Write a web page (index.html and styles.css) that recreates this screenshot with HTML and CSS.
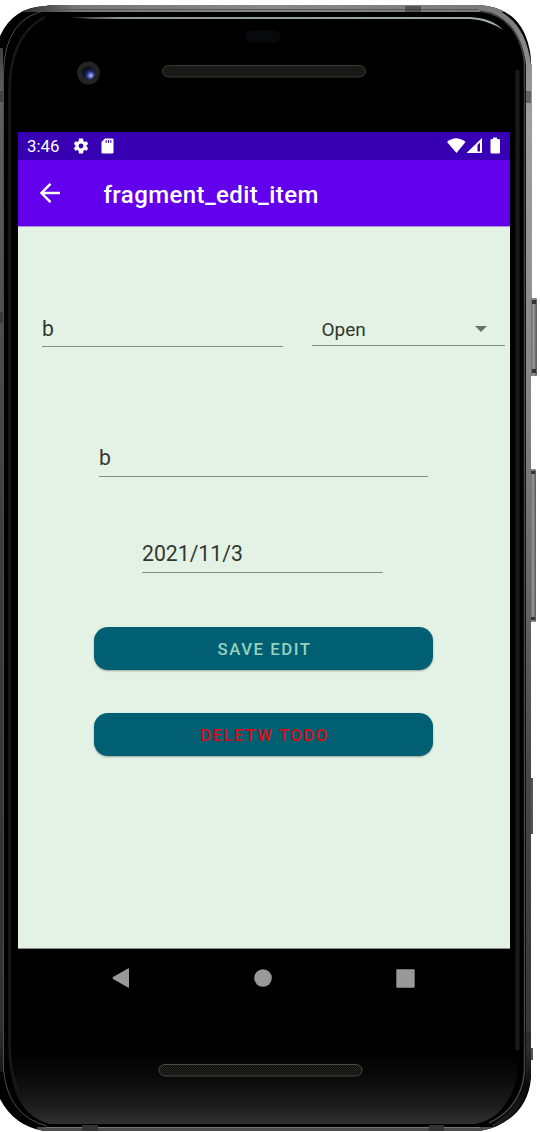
FILE: index.html
```html
<!DOCTYPE html>
<html lang="en">
<head>
<meta charset="utf-8">
<title>fragment_edit_item</title>
<link rel="stylesheet" href="styles.css">
</head>
<body>
<div class="device">
  <svg class="frame" width="540" height="1132" viewBox="0 0 540 1132" aria-hidden="true">
    <defs>
      <linearGradient id="rim" gradientUnits="userSpaceOnUse" x1="0" y1="0" x2="0" y2="1132"><stop offset="0" stop-color="#777"/><stop offset=".1" stop-color="#a0a0a0"/><stop offset=".35" stop-color="#858585"/><stop offset=".5" stop-color="#6b6b6b"/><stop offset=".68" stop-color="#474747"/><stop offset=".92" stop-color="#353535"/><stop offset=".96" stop-color="#0a0a0a"/><stop offset="1" stop-color="#222"/></linearGradient>
      <linearGradient id="leftRim" gradientUnits="userSpaceOnUse" x1="0" y1="30" x2="0" y2="1080"><stop offset="0" stop-color="#333"/><stop offset=".06" stop-color="#606060"/><stop offset=".5" stop-color="#3c3c3c"/><stop offset=".95" stop-color="#303030"/><stop offset="1" stop-color="#111"/></linearGradient>
      <linearGradient id="topRim" x1="0" y1="0" x2="1" y2="0"><stop offset="0" stop-color="#111"/><stop offset=".14" stop-color="#777"/><stop offset=".5" stop-color="#888"/><stop offset="1" stop-color="#777"/></linearGradient>
      <linearGradient id="chin" x1="0" y1="0" x2="0" y2="1"><stop offset="0" stop-color="#000"/><stop offset=".35" stop-color="#090909"/><stop offset=".75" stop-color="#1c1c1c"/><stop offset="1" stop-color="#303030"/></linearGradient>
      <linearGradient id="shine" x1="0" y1="0" x2="1" y2="0"><stop offset="0" stop-color="#222"/><stop offset=".12" stop-color="#8d9696"/><stop offset="1" stop-color="#a2abab"/></linearGradient>
      <linearGradient id="edge" x1="0" y1="0" x2="1" y2="0"><stop offset="0" stop-color="#000"/><stop offset=".5" stop-color="#1b1b1b"/><stop offset="1" stop-color="#000"/></linearGradient>
      <linearGradient id="keyMetal" x1="0" y1="0" x2="1" y2="0"><stop offset="0" stop-color="#555"/><stop offset=".5" stop-color="#999"/><stop offset="1" stop-color="#555"/></linearGradient>
      <radialGradient id="lens" cx=".68" cy=".7" r=".7"><stop offset="0" stop-color="#c2cdff"/><stop offset=".2" stop-color="#6878d0"/><stop offset=".5" stop-color="#1c2460"/><stop offset="1" stop-color="#090910"/></radialGradient>
      <pattern id="mesh" width="2" height="2" patternUnits="userSpaceOnUse"><rect width="2" height="2" fill="#10100e"/><rect width="1" height="1" fill="#292823"/><rect x="1" y="1" width="1" height="1" fill="#1e1d1a"/></pattern>
      <clipPath id="body"><path d="M0 36Q13 7 46 6L50 5H478Q520 7 529 47Q531 54 531 65V1078Q528 1112 497 1126Q485 1131 476 1131H44Q14 1126 0 1099Z"/></clipPath>
    </defs>
    <rect x="530" y="298" width="7" height="78" rx="1.500" fill="url(#keyMetal)"/>
    <path d="M532 300H536V304H532ZM532 369H536V373H532Z" fill="#333"/>
    <rect x="530" y="469" width="6" height="153" rx="1.500" fill="url(#keyMetal)"/>
    <path d="M531 471H535V474H531ZM531 617H535V620H531Z" fill="#333"/>
    <path d="M531 64h1V298H531Z" fill="#999"/>
    <path d="M531 778h2v56h-2ZM531 1048h2v12h-2Z" fill="#555"/>
    <g clip-path="url(#body)">
      <rect width="540" height="1132" fill="#000"/>
      <rect y="5" width="540" height="7" fill="url(#topRim)"/>
      <path d="M50 9.500H478" stroke="#555" fill="none"/>
      <path d="M2 85Q3 13 50 12H476Q519 16 525 66V110H2Z" fill="#000"/>
      <path d="M8 1050Q10 1114 50 1124H475Q517 1116 520 1050Z" fill="url(#chin)"/>
      <path d="M9.500 90Q10 35 45 17M9.500 90V1045Q10 1075 19 1092" fill="none" stroke="#181818" stroke-width="2.500"/>
      <path d="M517.500 70V1050" stroke="#191919" stroke-width="4"/>
      <path d="M1.500 48V1072" stroke="url(#leftRim)" stroke-width="3"/>
      <path d="M484 8Q523 17 528.500 65V1072Q526 1107 493 1127" fill="none" stroke="url(#rim)" stroke-width="5"/>
      <path d="M480 11Q518 16 524.500 62V1072Q521 1108 489 1123" fill="none" stroke="#444" stroke-width="1.500"/>
      <path d="M48 10Q5 17 3.500 72V1070Q8 1116 47 1126" fill="none" stroke="#4c4c4c" stroke-width="1"/>
      <rect x="37" y="1127" width="455" height="4" fill="#4f4d4f"/>
      <path d="M46 1127.500H480" stroke="#777577"/>
      <path d="M82 1125h16v6H82ZM429 1125h15v6h-15Z" fill="#343334"/>
      <path d="M405 6h16v6h-16ZM524 91h7v12h-7ZM0 91h3v11H0ZM0 312h3v11H0ZM524 1033h7v12h-7Z" fill="#222" fill-opacity=".45"/>
      <path d="M68 17H470Q492 18 503 30Q488 20 470 19H90Z" fill="url(#shine)"/>
    </g>
    <rect x="245.500" y="30.500" width="35" height="12" rx="6" fill="#08090d"/>
    <circle cx="88.500" cy="73" r="11.500" fill="#242222"/>
    <circle cx="88.500" cy="73" r="6.500" fill="url(#lens)"/>
    <rect x="162.500" y="65.500" width="203" height="11.500" rx="5.750" fill="url(#mesh)" stroke="#393734"/>
    <rect x="159" y="1064.500" width="203" height="11.500" rx="5.750" fill="url(#mesh)" stroke="#494b47"/>
  </svg>

  <main class="screen">
    <header class="status-bar">
      <span class="clock">3:46</span>
      <svg class="gear" width="18" height="18" viewBox="0 0 24 24"><path fill="#fff" fill-rule="evenodd" d="M19.400 13a7.500 7.500 0 0 0 0-2l2.200-1.700-2.100-3.600-2.600 1.100a7.500 7.500 0 0 0-1.700-1L14.800 2H9.200l-.4 3.800a7.500 7.500 0 0 0-1.700 1L4.500 5.700 2.400 9.300 4.600 11a7.500 7.500 0 0 0 0 2l-2.200 1.700 2.100 3.600 2.600-1.100a7.500 7.500 0 0 0 1.700 1l.4 3.800h5.600l.4-3.800a7.500 7.500 0 0 0 1.700-1l2.600 1.100 2.100-3.600ZM12 15.200a3.200 3.200 0 1 1 0-6.400 3.200 3.200 0 0 1 0 6.400Z"/></svg>
      <svg class="sd-card" width="13" height="16" viewBox="0 0 13 16"><path fill="#fff" d="M4 .5h7.500Q12.500.5 12.500 1.500v12.700q0 1.300-1.300 1.300H1.700Q.5 15.500.5 14.200V4Z"/><path d="M5.200 2v3M7.500 2v3M9.800 2v3" stroke="#3700b3"/></svg>
      <svg class="signals" width="54" height="18" viewBox="0 0 54 18"><path fill="#fff" d="M0 5Q9-2.500 18.500 5L9.500 16Z"/><path fill="#fff" fill-rule="evenodd" d="M19.500 16 35 1v15ZM30.500 8v6.500h2.500V5.500Z"/><path fill="#fff" d="M46 .5h4V2h2q1 0 1 1v12.500q0 1-1 1h-7.500q-1 0-1-1V3q0-1 1-1H46Z"/></svg>
    </header>
    <div class="app-bar">
      <svg class="back" width="20" height="20" viewBox="0 0 20 20"><path d="M20 10H2M10.500.8 1.500 10l9 9.200" fill="none" stroke="#fff" stroke-width="2.400"/></svg>
      <h1 class="title">fragment_edit_item</h1>
    </div>
    <section class="form">
      <div class="row">
        <div class="field name">b</div>
        <div class="field status"><span>Open</span><svg width="12" height="6" viewBox="0 0 12 6"><path d="M0 0h12L6 6Z" fill="#69706a"/></svg></div>
      </div>
      <div class="field description">b</div>
      <div class="field date">2021/11/3</div>
      <button class="button save">SAVE EDIT</button>
      <button class="button delete">DELETW TODO</button>
    </section>
    <nav class="nav-bar">
      <svg width="18" height="20" viewBox="0 0 18 20"><path d="M1 9 16 .5q1-.5 1 .5v18q0 1-1 .5L1 11q-1-1 0-2Z" fill="#999"/></svg>
      <svg width="18" height="18" viewBox="0 0 18 18"><circle cx="9" cy="9" r="8.800" fill="#999"/></svg>
      <svg width="19" height="19" viewBox="0 0 19 19"><rect x=".3" y=".3" width="18.400" height="18.400" rx="1" fill="#999"/></svg>
    </nav>
  </main>
</div>
</body>
</html>
```
FILE: styles.css
```css
* { box-sizing: border-box; }
body { margin: 0; background: #fff; font-family: Roboto, sans-serif; }
.device { position: relative; width: 540px; height: 1132px; padding: 132px 30px 0 18px; overflow: hidden; }
.frame { position: absolute; left: 0; top: 0; }
.screen { position: relative; width: 492px; display: flex; flex-direction: column; }
.status-bar { height: 28px; background: #3700b3; display: flex; align-items: center; padding: 0 9px; color: #fff; }
.clock { font-size: 16.8px; line-height: 28px; width: 45px; }
.sd-card { margin-left: 11px; }
.signals { margin-left: auto; }
.app-bar { height: 67px; background: #6200ee; border-bottom: 1px solid #a994dc; display: flex; align-items: center; padding-left: 22px; color: #fff; }
.title { margin: 3px 0 0 43.5px; font-size: 24px; line-height: 32px; font-weight: 500; letter-spacing: .4px; }
.form { height: 722px; background: #e4f2e5; border-bottom: 1px solid #829087; display: flex; flex-direction: column; align-items: flex-start; padding-top: 82px; }
.row { display: flex; width: 100%; height: 39px; padding-left: 24px; gap: 29px; align-items: flex-start; }
.field { height: 39px; border-bottom: 1px solid #838d84; color: #303731; font-size: 21.2px; line-height: 39px; }
.name { width: 241px; height: 38px; }
.status { width: 193px; height: 37px; display: flex; align-items: center; justify-content: space-between; padding: 4px 18px 0 9.5px; font-size: 19px; }
.description { width: 329px; margin: 90px 0 0 81px; }
.date { width: 241px; margin: 56.5px 0 0 124px; }
.button { width: 339px; height: 43px; margin-left: 76px; padding: 0 0 0 2px; border: 0; border-radius: 14px; background: #005f73; box-shadow: 0 1px 2px #0005; font: 500 16.8px/24px Roboto, sans-serif; letter-spacing: 1.5px; }
.save { margin-top: 54.5px; color: #94d2bd; }
.delete { margin-top: 43px; color: #d90c16; }
.nav-bar { height: 58px; background: #000; display: flex; justify-content: space-between; align-items: center; padding: 0 95px 0 94px; }
```
